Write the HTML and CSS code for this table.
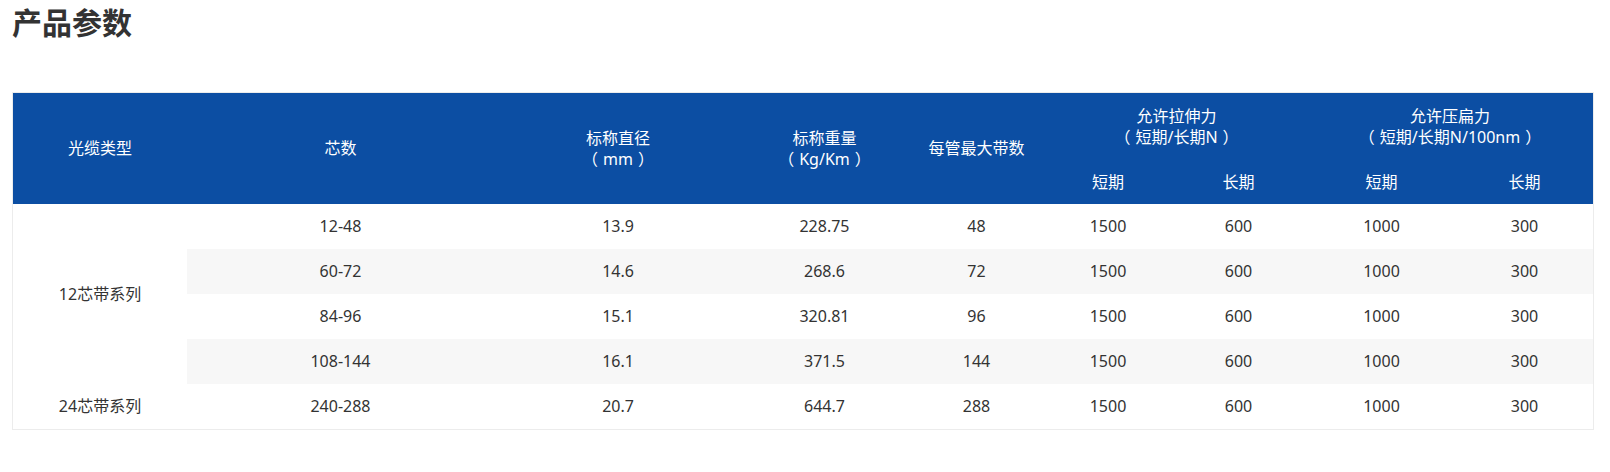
FILE: index.html
```html
<!DOCTYPE html>
<html lang="zh-CN">
<head>
<meta charset="utf-8">
<title>产品参数</title>
<link rel="stylesheet" href="styles.css">
</head>
<body>
<div class="page">
  <h2 class="title">产品参数</h2>
  <table class="spec">
    <colgroup>
      <col class="c1"><col class="c2"><col class="c3"><col class="c4"><col class="c5">
      <col class="c6"><col class="c7"><col class="c8"><col class="c9">
    </colgroup>
    <thead>
      <tr class="h1">
        <th rowspan="2">光缆类型</th>
        <th rowspan="2">芯数</th>
        <th rowspan="2">标称直径<br><span class="po">（</span>mm<span class="pc">）</span></th>
        <th rowspan="2">标称重量<br><span class="po">（</span>Kg/Km<span class="pc">）</span></th>
        <th rowspan="2">每管最大带数</th>
        <th colspan="2">允许拉伸力<br><span class="po">（</span>短期/长期N<span class="pc">）</span></th>
        <th colspan="2">允许压扁力<br><span class="po">（</span>短期/长期N/100nm<span class="pc">）</span></th>
      </tr>
      <tr class="h2">
        <th>短期</th><th>长期</th><th>短期</th><th>长期</th>
      </tr>
    </thead>
    <tbody>
      <tr>
        <td rowspan="4" class="type">12芯带系列</td>
        <td>12-48</td><td>13.9</td><td>228.75</td><td>48</td><td>1500</td><td>600</td><td>1000</td><td>300</td>
      </tr>
      <tr>
        <td>60-72</td><td>14.6</td><td>268.6</td><td>72</td><td>1500</td><td>600</td><td>1000</td><td>300</td>
      </tr>
      <tr>
        <td>84-96</td><td>15.1</td><td>320.81</td><td>96</td><td>1500</td><td>600</td><td>1000</td><td>300</td>
      </tr>
      <tr>
        <td>108-144</td><td>16.1</td><td>371.5</td><td>144</td><td>1500</td><td>600</td><td>1000</td><td>300</td>
      </tr>
      <tr>
        <td class="type">24芯带系列</td>
        <td>240-288</td><td>20.7</td><td>644.7</td><td>288</td><td>1500</td><td>600</td><td>1000</td><td>300</td>
      </tr>
    </tbody>
  </table>
</div>
</body>
</html>
```

FILE: styles.css
```css
html, body {
  margin: 0;
  padding: 0;
  background: #ffffff;
}

.page {
  padding: 0 16px 0 12px;
  font-family: "Noto Sans", "Noto Sans CJK SC", sans-serif;
  color: #333333;
}

.title {
  margin: 0;
  padding-top: 4px;
  height: 88px;
  font-family: "Noto Sans CJK SC", sans-serif;
  font-size: 30px;
  line-height: 34px;
  font-weight: 700;
  color: #333333;
}

.spec {
  width: 1582px;
  table-layout: fixed;
  border-collapse: separate;
  border-spacing: 0;
  border: 1px solid #ececec;
  font-size: 16px;
  line-height: 21px;
}

.c1 { width: 174px; }
.c2 { width: 307px; }
.c3 { width: 248px; }
.c4 { width: 165px; }
.c5 { width: 139px; }
.c6 { width: 124px; }
.c7 { width: 137px; }
.c8 { width: 149px; }
.c9 { width: 137px; }

.spec thead th {
  background: #0c4ea3;
  color: #ffffff;
  font-weight: 400;
  text-align: center;
  vertical-align: middle;
  padding: 0;
}

.po { margin-right: 5px; }
.pc { margin-left: 5px; }

.spec .h1 { height: 67px; }
.spec .h2 { height: 44px; }

.spec tbody tr { height: 45px; }

.spec tbody td {
  padding: 0;
  text-align: center;
  vertical-align: middle;
  color: #333333;
  background: #ffffff;
}

.spec tbody tr:nth-child(even) td {
  background: #f7f7f7;
}
```
